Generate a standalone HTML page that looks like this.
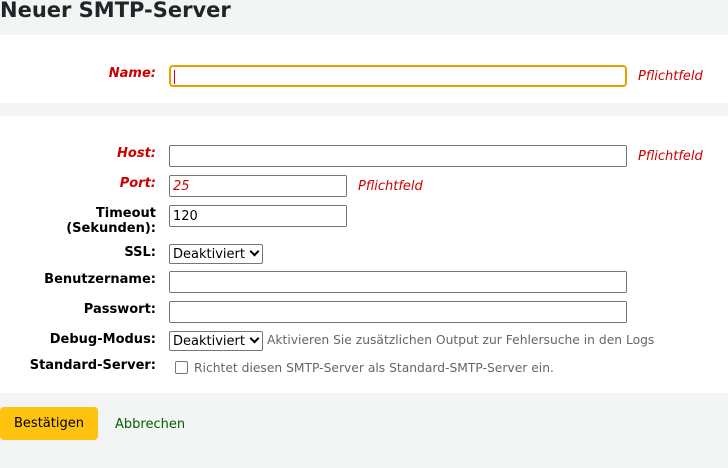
<!DOCTYPE html>
<html><head><meta charset="utf-8"><style>
body{margin:0;width:728px;height:468px;background:#f3f4f4;font-family:"DejaVu Sans","Liberation Sans",sans-serif;font-size:13px;color:#000;position:relative;overflow:hidden}
.a{position:absolute}
h1{position:absolute;left:0;top:-2px;margin:0;font-size:21px;font-weight:bold;color:#202528}
.panel{position:absolute;left:0;width:728px;background:#fff}
.lbl{position:absolute;right:572px;font-weight:bold;text-align:right;line-height:15px;margin-top:1px}
.req{color:#c00;font-style:italic}
.in{position:absolute;left:169px;box-sizing:border-box;border:1px solid #767676;border-radius:2px;background:#fff;height:22px}
.pf{position:absolute;color:#c00;font-style:italic;margin-top:2px}
.sel{position:absolute;left:169px;box-sizing:border-box;border:1px solid #767676;border-radius:2px;height:20px;width:94px;padding-left:3px;line-height:19px;background:#fff}
.chev{position:absolute;right:4px;width:5px;height:5px;border-right:2px solid #000;border-bottom:2px solid #000;transform:rotate(45deg);top:3px}
.hint{position:absolute;color:#666;font-size:12.3px}
</style></head><body>
<h1>Neuer SMTP-Server</h1>
<div class="panel" style="top:35px;height:68px"></div>
<div class="panel" style="top:116px;height:277px"></div>

<div class="lbl req" style="top:65px">Name:</div>
<div class="in" style="top:65px;width:458px;height:22px;border:2px solid #e8a000;border-radius:4px"><div class="a" style="left:3px;top:3px;width:1px;height:14px;background:#c00"></div></div>
<div class="pf" style="left:638px;top:67px">Pflichtfeld</div>

<div class="lbl req" style="top:145px">Host:</div>
<div class="in" style="top:145px;width:458px"></div>
<div class="pf" style="left:638px;top:147px">Pflichtfeld</div>

<div class="lbl req" style="top:175px">Port:</div>
<div class="in" style="top:175px;width:178px"><span class="a req" style="left:3px;top:3px">25</span></div>
<div class="pf" style="left:358px;top:177px">Pflichtfeld</div>

<div class="lbl" style="top:205px">Timeout<br>(Sekunden):</div>
<div class="in" style="top:205px;width:178px"><span class="a" style="left:3px;top:3px">120</span></div>

<div class="lbl" style="top:244px">SSL:</div>
<div class="sel" style="top:244px">Deaktiviert<span class="chev"></span></div>

<div class="lbl" style="top:271px">Benutzername:</div>
<div class="in" style="top:271px;width:458px"></div>

<div class="lbl" style="top:301px">Passwort:</div>
<div class="in" style="top:301px;width:458px"></div>

<div class="lbl" style="top:331px">Debug-Modus:</div>
<div class="sel" style="top:331px">Deaktiviert<span class="chev"></span></div>
<div class="hint" style="left:267px;top:333px">Aktivieren Sie zusätzlichen Output zur Fehlersuche in den Logs</div>

<div class="lbl" style="top:357px">Standard-Server:</div>
<div class="a" style="left:175px;top:361px;width:11px;height:11px;border:1px solid #767676;border-radius:2px;background:#fff"></div>
<div class="hint" style="left:194px;top:361px">Richtet diesen SMTP-Server als Standard-SMTP-Server ein.</div>

<div class="a" style="left:0;top:407px;width:98px;height:33px;background:#ffc20e;border-radius:4px;line-height:34px;text-align:center;color:#000">Bestätigen</div>
<div class="a" style="left:115px;top:417px;color:#006100">Abbrechen</div>
</body></html>
